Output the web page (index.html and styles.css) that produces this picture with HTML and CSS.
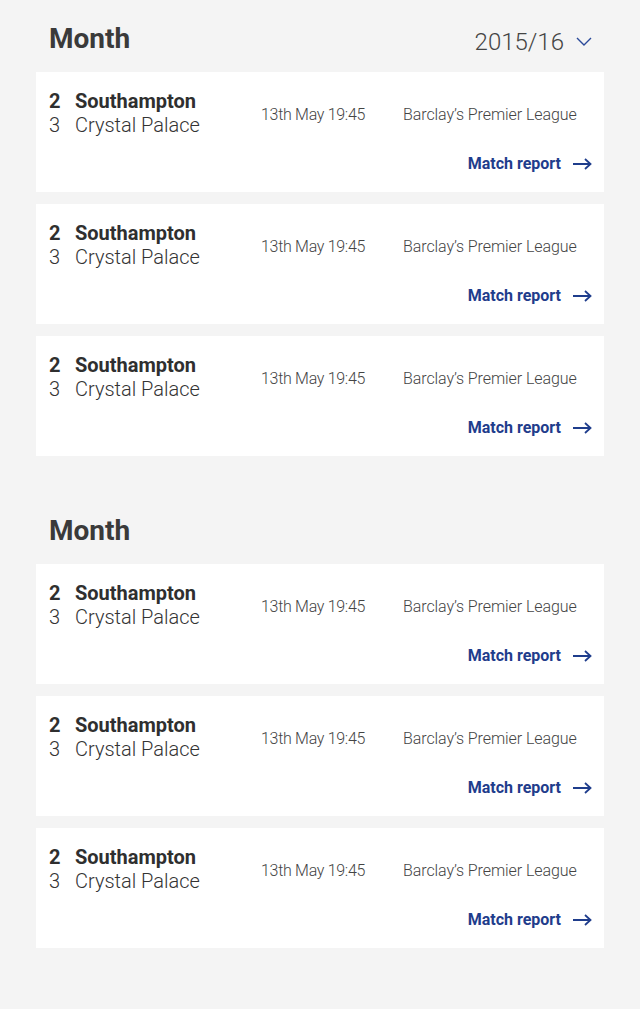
FILE: index.html
```html
<!DOCTYPE html>
<html lang="en">
<head>
<meta charset="utf-8">
<title>Fixtures</title>
<link rel="stylesheet" href="styles.css">
</head>
<body>
<main class="page">
  <section class="group">
    <header class="group-head">
      <h2 class="month">Month</h2>
      <button class="season">2015/16
        <svg class="chev" width="16" height="9" viewBox="0 0 16 9"><path d="M1 1 L8 8 L15 1" fill="none" stroke="#2a4a9a" stroke-width="1.4"/></svg>
      </button>
    </header>
    <div class="list">
      <article class="card">
        <div class="teams">
          <div class="row win"><span class="score">2</span><span class="team">Southampton</span></div>
          <div class="row"><span class="score">3</span><span class="team">Crystal Palace</span></div>
        </div>
        <div class="date">13th May 19:45</div>
        <div class="league">Barclay’s Premier League</div>
        <a class="report" href="#">Match report <svg class="arrow" width="19" height="12" viewBox="0 0 19 12"><path d="M0 6 H17 M12 1 L17.5 6 L12 11" fill="none" stroke="#1f3d8c" stroke-width="1.8"/></svg></a>
      </article>
      <article class="card">
        <div class="teams">
          <div class="row win"><span class="score">2</span><span class="team">Southampton</span></div>
          <div class="row"><span class="score">3</span><span class="team">Crystal Palace</span></div>
        </div>
        <div class="date">13th May 19:45</div>
        <div class="league">Barclay’s Premier League</div>
        <a class="report" href="#">Match report <svg class="arrow" width="19" height="12" viewBox="0 0 19 12"><path d="M0 6 H17 M12 1 L17.5 6 L12 11" fill="none" stroke="#1f3d8c" stroke-width="1.8"/></svg></a>
      </article>
      <article class="card">
        <div class="teams">
          <div class="row win"><span class="score">2</span><span class="team">Southampton</span></div>
          <div class="row"><span class="score">3</span><span class="team">Crystal Palace</span></div>
        </div>
        <div class="date">13th May 19:45</div>
        <div class="league">Barclay’s Premier League</div>
        <a class="report" href="#">Match report <svg class="arrow" width="19" height="12" viewBox="0 0 19 12"><path d="M0 6 H17 M12 1 L17.5 6 L12 11" fill="none" stroke="#1f3d8c" stroke-width="1.8"/></svg></a>
      </article>
    </div>
  </section>
  <section class="group">
    <header class="group-head">
      <h2 class="month">Month</h2>
    </header>
    <div class="list">
      <article class="card">
        <div class="teams">
          <div class="row win"><span class="score">2</span><span class="team">Southampton</span></div>
          <div class="row"><span class="score">3</span><span class="team">Crystal Palace</span></div>
        </div>
        <div class="date">13th May 19:45</div>
        <div class="league">Barclay’s Premier League</div>
        <a class="report" href="#">Match report <svg class="arrow" width="19" height="12" viewBox="0 0 19 12"><path d="M0 6 H17 M12 1 L17.5 6 L12 11" fill="none" stroke="#1f3d8c" stroke-width="1.8"/></svg></a>
      </article>
      <article class="card">
        <div class="teams">
          <div class="row win"><span class="score">2</span><span class="team">Southampton</span></div>
          <div class="row"><span class="score">3</span><span class="team">Crystal Palace</span></div>
        </div>
        <div class="date">13th May 19:45</div>
        <div class="league">Barclay’s Premier League</div>
        <a class="report" href="#">Match report <svg class="arrow" width="19" height="12" viewBox="0 0 19 12"><path d="M0 6 H17 M12 1 L17.5 6 L12 11" fill="none" stroke="#1f3d8c" stroke-width="1.8"/></svg></a>
      </article>
      <article class="card">
        <div class="teams">
          <div class="row win"><span class="score">2</span><span class="team">Southampton</span></div>
          <div class="row"><span class="score">3</span><span class="team">Crystal Palace</span></div>
        </div>
        <div class="date">13th May 19:45</div>
        <div class="league">Barclay’s Premier League</div>
        <a class="report" href="#">Match report <svg class="arrow" width="19" height="12" viewBox="0 0 19 12"><path d="M0 6 H17 M12 1 L17.5 6 L12 11" fill="none" stroke="#1f3d8c" stroke-width="1.8"/></svg></a>
      </article>
    </div>
  </section>
</main>
</body>
</html>
```
FILE: styles.css
```css
* { box-sizing: border-box; }
html, body { margin: 0; padding: 0; background: #f4f4f4; }
body { font-family: Roboto, "Liberation Sans", sans-serif; color: #333; }
.page { padding: 0 36px; display: flex; flex-direction: column; gap: 36px; }
.group-head {
  height: 72px;
  padding: 6px 12px 0 13px;
  display: flex;
  align-items: center;
  justify-content: space-between;
}
.month { margin: 0; font-size: 28px; font-weight: 700; color: #3a3a3a; line-height: 32px; }
.season {
  border: 0; background: none; padding: 0; margin-top: 5px;
  font-family: inherit; font-size: 24px; font-weight: 300; color: #444;
  display: flex; align-items: center; gap: 12px; line-height: 28px;
}
.chev { display: block; }
.list { display: flex; flex-direction: column; gap: 12px; }
.card {
  background: #fff;
  height: 120px;
  padding: 17px 12px 0 13px;
  display: grid;
  grid-template-columns: 212px 142px 1fr;
  grid-template-rows: 48px 1fr;
  align-items: center;
}
.row { display: flex; font-size: 20px; line-height: 24px; font-weight: 300; color: #333; }
.row.win { font-weight: 700; color: #2f2f2f; }
.score { width: 26px; }
.date, .league { font-size: 16px; font-weight: 300; color: #444; padding-top: 2px; }
.date { letter-spacing: -0.3px; }
.league { letter-spacing: -0.08px; }
.report {
  grid-column: 1 / -1;
  justify-self: end;
  align-self: start;
  margin-top: 17px;
  display: flex; align-items: center; gap: 12px;
  color: #1f3d8c; font-weight: 700; font-size: 16px; text-decoration: none; line-height: 20px;
}
.arrow { display: block; }
```
